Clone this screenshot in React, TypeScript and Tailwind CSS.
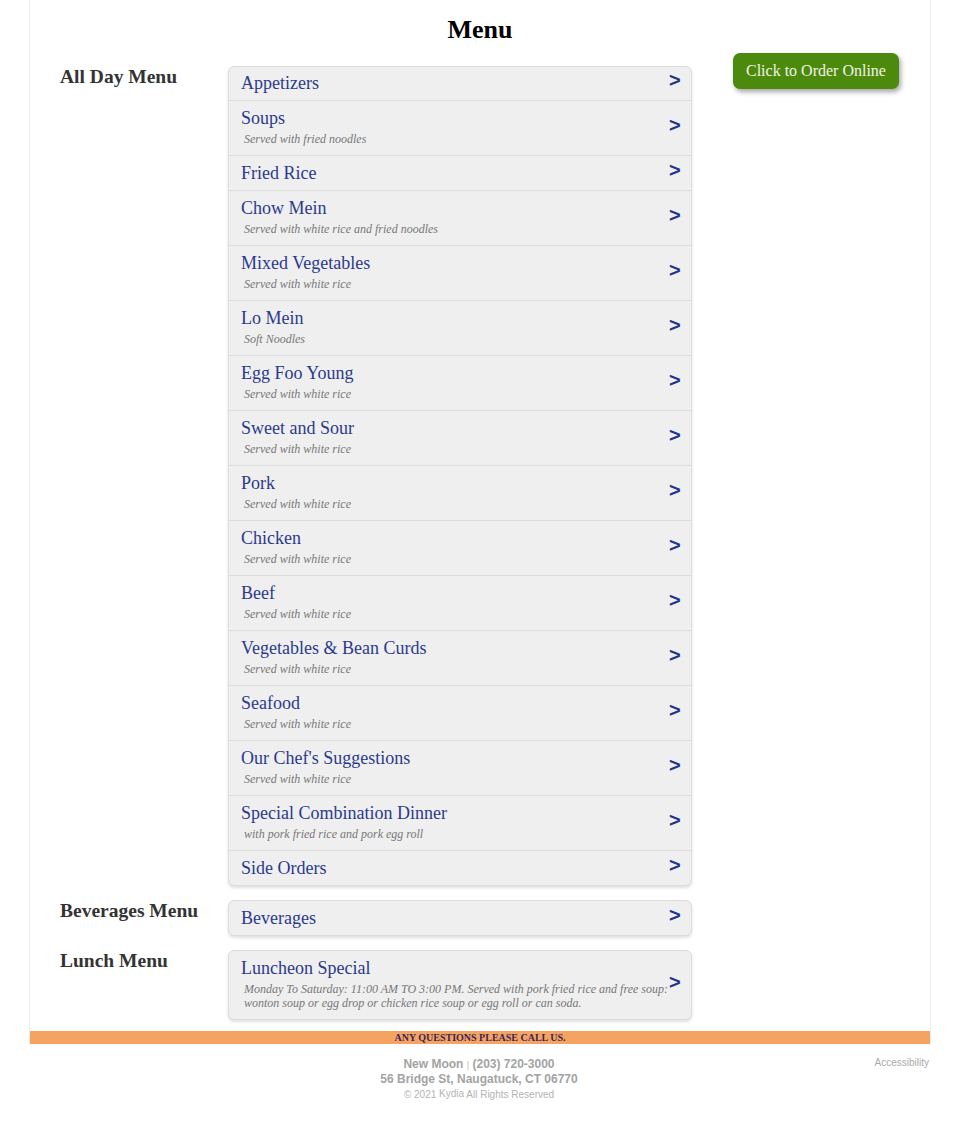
import React from 'react';

type Item = {
  title: string;
  note?: string;
};

const allDay: Item[] = [
  { title: 'Appetizers' },
  { title: 'Soups', note: 'Served with fried noodles' },
  { title: 'Fried Rice' },
  { title: 'Chow Mein', note: 'Served with white rice and fried noodles' },
  { title: 'Mixed Vegetables', note: 'Served with white rice' },
  { title: 'Lo Mein', note: 'Soft Noodles' },
  { title: 'Egg Foo Young', note: 'Served with white rice' },
  { title: 'Sweet and Sour', note: 'Served with white rice' },
  { title: 'Pork', note: 'Served with white rice' },
  { title: 'Chicken', note: 'Served with white rice' },
  { title: 'Beef', note: 'Served with white rice' },
  { title: 'Vegetables & Bean Curds', note: 'Served with white rice' },
  { title: 'Seafood', note: 'Served with white rice' },
  { title: "Our Chef's Suggestions", note: 'Served with white rice' },
  { title: 'Special Combination Dinner', note: 'with pork fried rice and pork egg roll' },
  { title: 'Side Orders' },
];

const sections: { name: string; items: Item[] }[] = [
  { name: 'All Day Menu', items: allDay },
  { name: 'Beverages Menu', items: [{ title: 'Beverages' }] },
  {
    name: 'Lunch Menu',
    items: [
      {
        title: 'Luncheon Special',
        note: 'Monday To Saturday: 11:00 AM TO 3:00 PM. Served with pork fried rice and free soup: wonton soup or egg drop or chicken rice soup or egg roll or can soda.',
      },
    ],
  },
];

const MenuRow = ({ item, tight }: { item: Item; tight?: boolean }) => (
  <div className={`flex items-center pl-[12px] pr-[14px] pb-[7px] ${tight ? 'pt-[6px]' : 'pt-[7px]'}`}>
    <div className="flex-1">
      <div className="text-[18px] leading-[20px] text-[#2b3a8c]">{item.title}</div>
      {item.note && (
        <div className="mt-[4px] mb-[2px] pl-[3px] text-[12px] leading-[14px] italic text-[#777]">
          {item.note}
        </div>
      )}
    </div>
    <div className="w-[8px] shrink-0 overflow-visible whitespace-nowrap text-left font-['Liberation_Sans',sans-serif] text-[20px] font-bold leading-[20px] text-[#22338a] -mt-[6px]">
      &gt;
    </div>
  </div>
);

export default function App() {
  return (
    <div className="min-h-screen bg-white font-['Liberation_Serif',serif]">
      <div className="mx-auto w-[902px] border-x border-[#eee]">
        <h1 className="pt-[15px] text-center text-[26px] font-bold leading-[30px] text-black">Menu</h1>

        <div className="mt-[8px] flex">
          <div className="mt-[13px] flex flex-col gap-[14px] pl-[30px]">
            {sections.map((s, si) => (
              <div key={s.name} className="flex">
                <div className="w-[168px] shrink-0 text-[19.5px] font-bold leading-[22px] text-[#333]">
                  {s.name}
                </div>
                <div className="w-[464px] divide-y divide-[#dcdcdc] rounded-[6px] border border-[#dcdcdc] bg-[#efefef] shadow-[0_2px_3px_rgba(0,0,0,0.12)]">
                  {s.items.map((it, i) => (
                    <MenuRow key={it.title} item={it} tight={si === 0 && i === 0} />
                  ))}
                </div>
              </div>
            ))}
          </div>

          <div className="pl-[41px]">
            <button className="rounded-[7px] bg-[#4b8a0c] px-[13px] py-[8px] text-[16px] leading-[20px] text-[#f2f2e6] shadow-[2px_3px_5px_rgba(0,0,0,0.35)]">
              Click to Order Online
            </button>
          </div>
        </div>

        <div className="mt-[11px] bg-[#f4a460] text-center text-[10px] font-bold leading-[13px] text-[#3b1f5c]">
          ANY QUESTIONS PLEASE CALL US.
        </div>
      </div>

      {/* Footer */}
      <div className="mx-auto flex w-[902px] pt-[13px] font-['Liberation_Sans',sans-serif] text-[#a3a3a3]">
        <div className="flex-1" />
        <div className="text-center">
          <div className="text-[12px] font-bold leading-[14px]">
            New Moon <span className="text-[9px] font-normal text-[#bbb]">|</span> (203) 720-3000
          </div>
          <div className="text-[12px] font-bold leading-[14px]">56 Bridge St, Naugatuck, CT 06770</div>
          <div className="mt-[2px] text-[10px] leading-[14px] text-[#b3b3b3]">
            © 2021 <span className="relative -top-[1px] text-[10px]">Kydia</span> All Rights Reserved
          </div>
        </div>
        <div className="flex-1 pr-[2px] text-right text-[10px] leading-[12px] text-[#aaa]">Accessibility</div>
      </div>
    </div>
  );
}
